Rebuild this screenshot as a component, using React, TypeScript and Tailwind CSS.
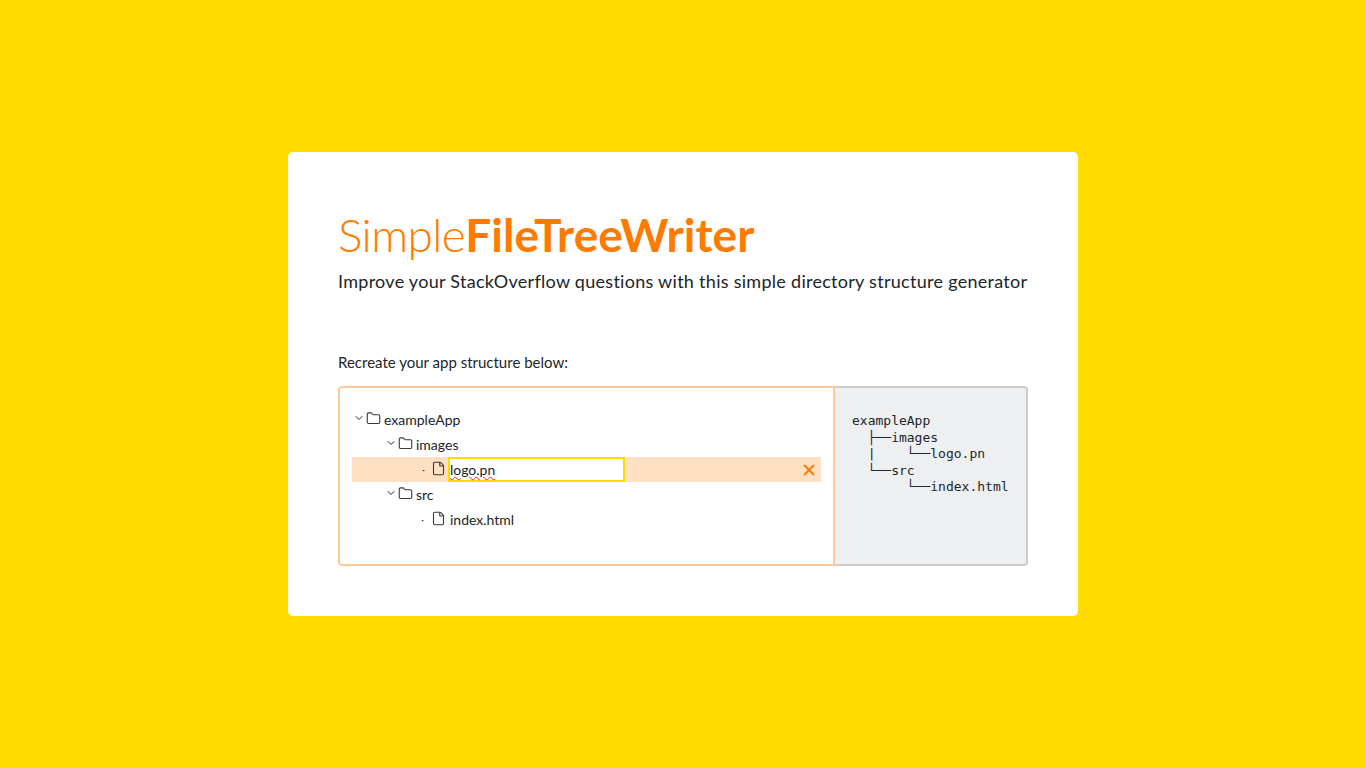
import { ChevronDown, File, Folder, X } from "lucide-react";

function Row({ depth, kind, label }: { depth: number; kind: "folder" | "file"; label: string }) {
  return (
    <div className="flex h-[25px] items-center text-[14px] text-[#212529]" style={{ paddingLeft: depth * 32 + 1 }}>
      {kind === "folder" ? (
        <ChevronDown size={12} strokeWidth={2} className="-mt-[3px] text-[#212529]" />
      ) : (
        <span className="mr-[6px] ml-[3px] w-[5px] text-center text-[10px]">·</span>
      )}
      {kind === "folder" ? (
        <Folder size={15} strokeWidth={1.75} className="-mt-[3px] ml-[1px] mr-[3px] text-[#343a40]" />
      ) : (
        <File size={15} strokeWidth={1.75} className="-mt-[3px] mr-[4px] text-[#343a40]" />
      )}
      <span>{label}</span>
    </div>
  );
}

export default function App() {
  return (
    <div className="flex h-[768px] items-center justify-center bg-[#ffdb00] font-['Lato','Noto_Sans',sans-serif]">
      <div className="w-[790px] rounded-[5px] bg-white px-[50px] pt-[50px] pb-[50px]">
        <h1 className="text-[46px] leading-[66px] text-[#ff7b00]">
          <span className="font-light tracking-[-0.65px]">Simple</span>
          <span className="font-bold tracking-[0.1px]">FileTreeWriter</span>
        </h1>
        <p className="text-[18px] leading-[27px] tracking-[0.28px] whitespace-nowrap text-[#212529]">
          Improve your StackOverflow questions with this simple directory structure generator
        </p>
        <p className="mt-[57px] mb-[13px] text-[15px] leading-[21px] text-[#212529]">Recreate your app structure below:</p>
        <div className="flex h-[180px]">
          <div className="flex-1 rounded-l-[4px] border-2 border-[#ffc999] px-[12px] py-[19px]">
            <Row depth={0} kind="folder" label="exampleApp" />
            <Row depth={1} kind="folder" label="images" />
            <div className="flex h-[25px] items-center bg-[#ffe0c2] pl-[69px] text-[14px] text-[#212529]">
              <span className="mr-[5px] w-[5px] text-center text-[10px]">·</span>
              <File size={15} strokeWidth={1.75} className="-mt-[3px] mr-[2px] text-[#343a40]" />
              <div className="h-[25px] w-[177px] border-2 border-[#ffdb00] bg-white leading-[21px]">
                <span className="underline decoration-[#ff2020] decoration-wavy decoration-1">logo.pn</span>
              </div>
              <X size={18} strokeWidth={2.5} className="mr-[3px] ml-auto text-[#ff7b00]" />
            </div>
            <Row depth={1} kind="folder" label="src" />
            <Row depth={2} kind="file" label="index.html" />
          </div>
          <div className="w-[193px] rounded-r-[4px] border-2 border-l-0 border-[#cfcbcd] bg-[#eeeff1] px-[17px] py-[25px]">
            <pre className="font-['DejaVu_Sans_Mono',monospace] text-[13px] leading-[16.5px] text-[#212529]">{`exampleApp
  ├──images
  |    └──logo.pn
  └──src
       └──index.html`}</pre>
          </div>
        </div>
      </div>
    </div>
  );
}
